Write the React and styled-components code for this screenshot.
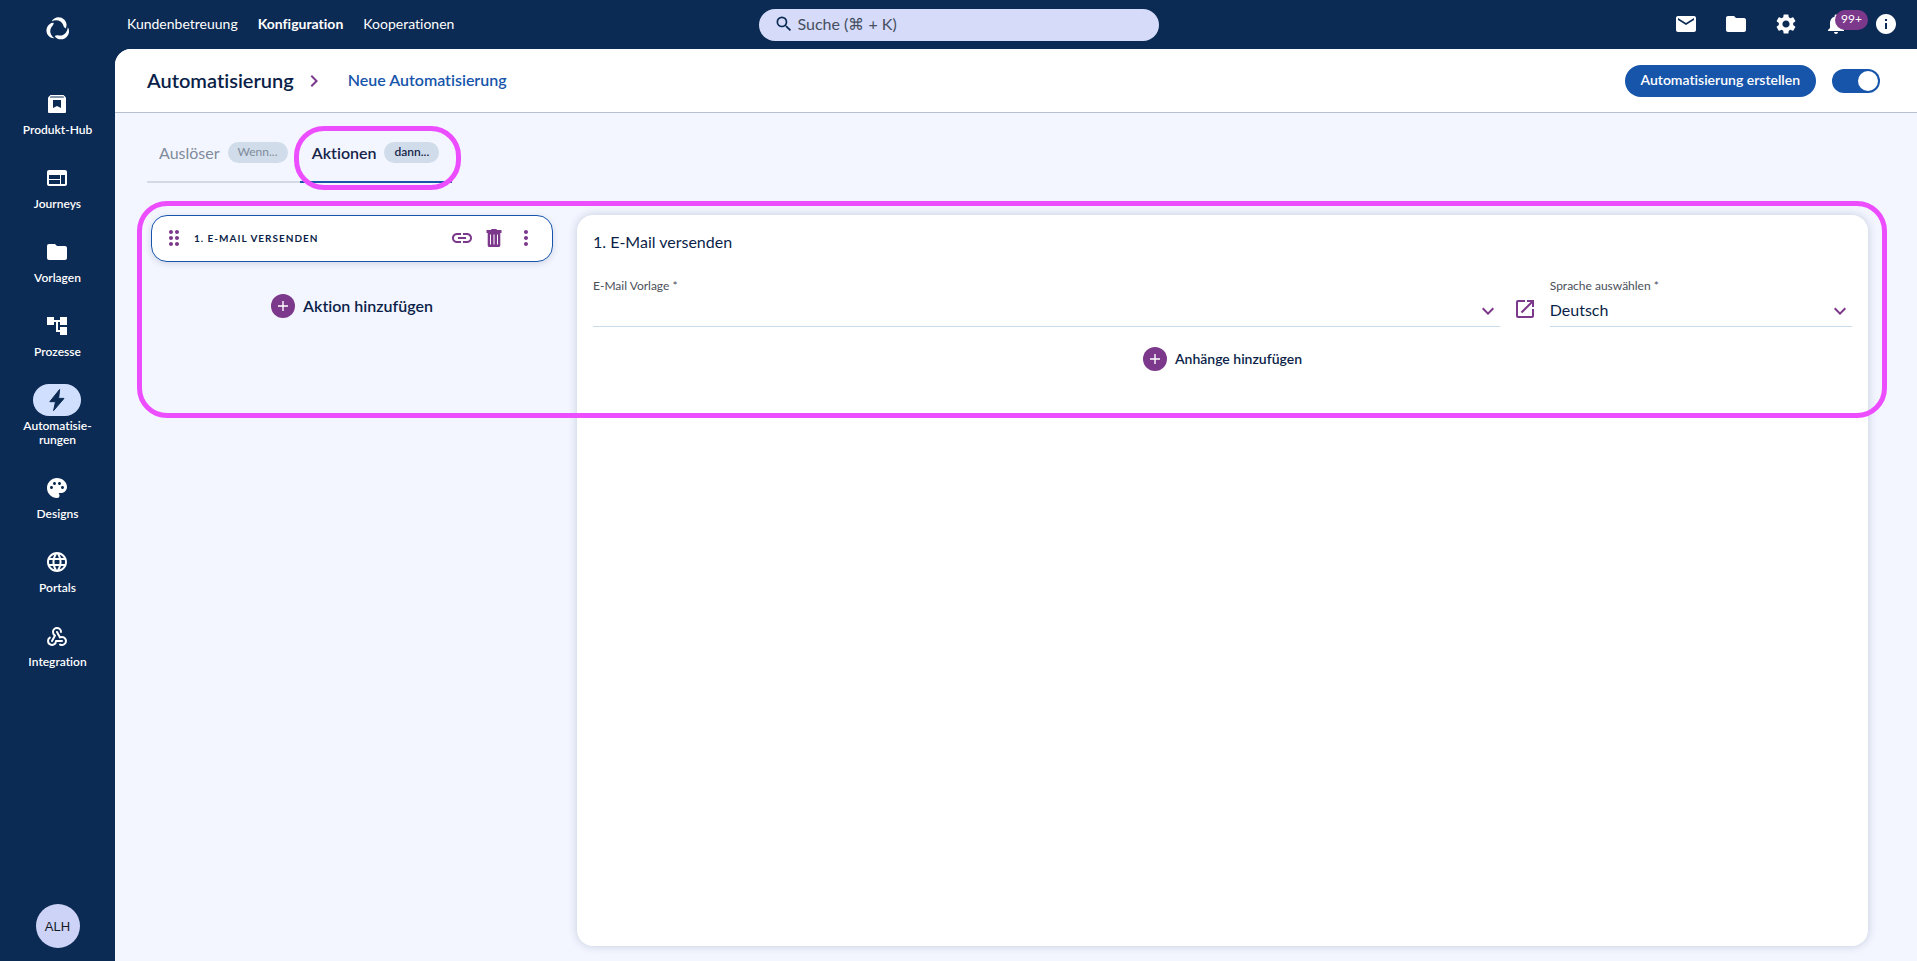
import React, { useState } from 'react';
import styled, { createGlobalStyle } from 'styled-components';
import {
    MdAccountTree,
    MdChevronRight,
    MdDragIndicator,
    MdExpandMore,
    MdFolder,
    MdInfo,
    MdLanguage,
    MdLink,
    MdMail,
    MdMoreVert,
    MdNotifications,
    MdOpenInNew,
    MdPalette,
    MdSearch,
    MdSettings,
    MdWeb,
} from 'react-icons/md';
import { TbWebhook } from 'react-icons/tb';

const colors = {
    navy: '#0b2a54',
    text: '#0b1f49',
    blue: '#1755ab',
    purple: '#7c388b',
    page: '#f3f6ff',
    chip: '#d0dce9',
    marker: '#ec4dff',
};

const GlobalStyle = createGlobalStyle`
  * {
    box-sizing: border-box;
  }
  body {
    margin: 0;
    background: ${colors.navy};
    color: ${colors.text};
    font-family: Lato, "Liberation Sans", sans-serif;
    font-size: 16px;
    font-variant-ligatures: none;
  }
  button, input, select {
    font-family: inherit;
    font-variant-ligatures: none;
  }
`;

const LogoIcon = () => (
    <svg width="26" height="26" viewBox="-13 -13 26 26" fill="currentColor" aria-hidden="true">
        {[0, 120, 240].map(angle => (
            <path
                key={angle}
                transform={`rotate(${angle})`}
                d="M-6.400 -7.600C-4.400 -12 2.400 -13.600 6.400 -9.200C8.800 -6.400 9.200 -3.200 7.600 -0.600C6.600 -1.200 5.600 -2.200 5.200 -4C3.600 -8.400 -1.600 -10 -6.400 -7.600Z"
            />
        ))}
    </svg>
);

const ProductIcon = () => (
    <svg width="24" height="24" viewBox="0 0 24 24" aria-hidden="true">
        <path fill="currentColor" d="M5.500 3h13L21 5.500V20a1 1 0 0 1-1 1H4a1 1 0 0 1-1-1V5.500z" />
        <path fill={colors.navy} d="M5.500 4.600h13l.7 1H4.800zM8 8h8v8l-4-2-4 2z" />
    </svg>
);

const BoltIcon = () => (
    <svg width="24" height="24" viewBox="0 0 24 24" aria-hidden="true">
        <path
            fill="currentColor"
            stroke="currentColor"
            strokeWidth="1"
            strokeLinejoin="round"
            d="M14.600 1.500L4.800 13.700h5.700L8.600 22.600L19 10.400h-5.400z"
        />
    </svg>
);

const TrashIcon = () => (
    <svg width="24" height="24" viewBox="0 0 24 24" aria-hidden="true">
        <path
            fill="currentColor"
            d="M9 4c.2-.8.600-1 1.200-1h3.600c.6 0 1 .2 1.200 1h4.500v3h-1.200v12.200c0 1-.8 1.800-1.800 1.800h-9c-1 0-1.800-.8-1.800-1.800V7H4.500V4z"
        />
        <path stroke="#fff" strokeWidth="1" d="M8.500 8.500v10M12 8.500v10M15.500 8.500v10" />
    </svg>
);

const navItems = [
    { name: 'Produkt-Hub', icon: <ProductIcon /> },
    { name: 'Journeys', icon: <MdWeb /> },
    { name: 'Vorlagen', icon: <MdFolder /> },
    { name: 'Prozesse', icon: <MdAccountTree /> },
    { name: <>Automatisie-<br />rungen</>, icon: <BoltIcon />, active: true },
    { name: 'Designs', icon: <MdPalette /> },
    { name: 'Portals', icon: <MdLanguage /> },
    { name: 'Integration', icon: <TbWebhook /> },
];

const tools = [
    { name: 'Nachrichten', icon: <MdMail /> },
    { name: 'Dateien', icon: <MdFolder /> },
    { name: 'Einstellungen', icon: <MdSettings /> },
    { name: 'Benachrichtigungen', icon: <MdNotifications />, badge: '99+' },
    { name: 'Info', icon: <MdInfo /> },
];

const AddAction = ({ small, children }) => (
    <AddButton type="button" $small={small}>
        <AddCircle>
            <svg width="12" height="12" viewBox="0 0 12 12" aria-hidden="true">
                <path d="M6 1v10M1 6h10" stroke="#fff" strokeWidth="1.400" />
            </svg>
        </AddCircle>
        {children}
    </AddButton>
);

const SelectField = ({ id, label, options }) => (
    <Field>
        <FieldLabel htmlFor={id}>{label} *</FieldLabel>
        <SelectWrap>
            <Select id={id}>
                {options.map(option => <option key={option}>{option}</option>)}
            </Select>
            <MdExpandMore />
        </SelectWrap>
    </Field>
);

const App = () => {
    const [enabled, setEnabled] = useState(true);

    return (
        <Page>
            <GlobalStyle />
            <TopBar>
                <TopLeft>
                    <Logo href="#" aria-label="Start"><LogoIcon /></Logo>
                    <TopNav>
                        <TopLink href="#">Kundenbetreuung</TopLink>
                        <TopLink href="#" $active>Konfiguration</TopLink>
                        <TopLink href="#">Kooperationen</TopLink>
                    </TopNav>
                </TopLeft>
                <Search>
                    <MdSearch />
                    <SearchInput type="search" aria-label="Suche" placeholder="Suche (⌘ + K)" />
                </Search>
                <Tools>
                    {tools.map(({ name, icon, badge }) => (
                        <ToolButton type="button" aria-label={name} key={name}>
                            {icon}
                            {badge && <Badge>{badge}</Badge>}
                        </ToolButton>
                    ))}
                </Tools>
            </TopBar>

            <Body>
                <Sidebar>
                    <SideNav>
                        {navItems.map(({ name, icon, active }, index) => (
                            <SideLink href="#" key={`nav_${index}`}>
                                <SideIcon $active={active}>{icon}</SideIcon>
                                <span>{name}</span>
                            </SideLink>
                        ))}
                    </SideNav>
                    <Avatar type="button">ALH</Avatar>
                </Sidebar>

                <Main>
                    <Header>
                        <Title>Automatisierung</Title>
                        <MdChevronRight />
                        <Crumb href="#">Neue Automatisierung</Crumb>
                        <HeaderActions>
                            <CreateButton type="button">Automatisierung erstellen</CreateButton>
                            <Switch
                                type="checkbox"
                                role="switch"
                                aria-label="Aktiv"
                                checked={enabled}
                                onChange={() => setEnabled(!enabled)}
                            />
                        </HeaderActions>
                    </Header>

                    <Content>
                        <Tabs role="tablist">
                            <Tab type="button" role="tab" aria-selected="false">
                                Auslöser <Chip>Wenn...</Chip>
                            </Tab>
                            <Tab type="button" role="tab" aria-selected="true" $active>
                                Aktionen <Chip>dann...</Chip>
                                <TabMarker />
                            </Tab>
                        </Tabs>

                        <Columns>
                            <Steps>
                                <StepCard>
                                    <IconButton type="button" aria-label="Verschieben"><MdDragIndicator /></IconButton>
                                    <StepName>1. E-Mail versenden</StepName>
                                    <IconButton type="button" aria-label="Verknüpfen"><MdLink /></IconButton>
                                    <IconButton type="button" aria-label="Löschen"><TrashIcon /></IconButton>
                                    <IconButton type="button" aria-label="Mehr"><MdMoreVert /></IconButton>
                                </StepCard>
                                <AddAction>Aktion hinzufügen</AddAction>
                            </Steps>

                            <Panel>
                                <PanelTitle>1. E-Mail versenden</PanelTitle>
                                <Fields>
                                    <SelectField id="template" label="E-Mail Vorlage" options={['']} />
                                    <IconButton type="button" aria-label="Vorlage öffnen"><MdOpenInNew /></IconButton>
                                    <SelectField id="language" label="Sprache auswählen" options={['Deutsch']} />
                                </Fields>
                                <AddAction small>Anhänge hinzufügen</AddAction>
                            </Panel>
                            <ColumnsMarker />
                        </Columns>
                    </Content>
                </Main>
            </Body>
        </Page>
    );
};

const Page = styled.div`
  min-height: 100vh;
  display: flex;
  flex-direction: column;
`;

const TopBar = styled.header`
  display: grid;
  grid-template-columns: 1fr 400px 1fr;
  align-items: center;
  height: 49px;
  color: #ffffff;
`;

const TopLeft = styled.div`
  display: flex;
  align-items: center;
`;

const Logo = styled.a`
  width: 116px;
  padding-top: 8px;
  color: inherit;
  display: flex;
  justify-content: center;
`;

const TopNav = styled.nav`
  display: flex;
  gap: 20px;
  padding: 0 0 2px 11px;
`;

const TopLink = styled.a`
  color: #ffffff;
  font-size: 14px;
  font-weight: ${props => props.$active ? 700 : 400};
  text-decoration: none;
`;

const Search = styled.label`
  display: flex;
  align-items: center;
  gap: 4px;
  height: 32px;
  padding: 0 15px 2px;
  border-radius: 16px;
  background: #d5dbf9;
  color: ${colors.navy};

  svg {
    width: 20px;
    height: 20px;
  }
`;

const SearchInput = styled.input`
  flex: 1;
  border: 0;
  padding: 0;
  outline: none;
  background: transparent;
  color: #454f60;
  font-size: 16px;

  &::placeholder {
    color: #454f60;
    opacity: 1;
  }
`;

const Tools = styled.div`
  display: flex;
  justify-content: flex-end;
  gap: 26px;
  padding: 0 19px 1px 0;
`;

const ToolButton = styled.button`
  position: relative;
  display: flex;
  border: 0;
  padding: 0;
  background: none;
  color: #ffffff;

  svg {
    width: 24px;
    height: 24px;
  }
`;

const Badge = styled.span`
  position: absolute;
  left: 11px;
  top: -2px;
  padding: 0 6px 2px;
  border-radius: 10px;
  background: ${colors.purple};
  font-size: 12px;
  line-height: 18px;
`;

const Body = styled.div`
  flex: 1;
  display: flex;
`;

const Sidebar = styled.aside`
  width: 115px;
  flex-shrink: 0;
  display: flex;
  flex-direction: column;
  justify-content: space-between;
  align-items: center;
  padding: 39px 0 13px;
`;

const SideNav = styled.nav`
  display: flex;
  flex-direction: column;
  gap: 25px;
`;

const SideLink = styled.a`
  display: flex;
  flex-direction: column;
  align-items: center;
  gap: 3px;
  color: #ffffff;
  font-size: 12px;
  font-weight: 600;
  line-height: 14px;
  text-align: center;
  text-decoration: none;
`;

const SideIcon = styled.span`
  display: flex;
  align-items: center;
  justify-content: center;
  width: 48px;
  height: 32px;
  border-radius: 16px;
  background: ${props => props.$active ? '#d1dfff' : 'transparent'};
  color: ${props => props.$active ? colors.navy : '#ffffff'};

  svg {
    width: 24px;
    height: 24px;
  }
`;

const Avatar = styled.button`
  width: 44px;
  height: 44px;
  border: 0;
  border-radius: 50%;
  padding: 0;
  background: #cdd3f7;
  color: #14181f;
  font-family: "Liberation Sans", sans-serif;
  font-size: 13px;
`;

const Main = styled.main`
  flex: 1;
  min-width: 0;
  display: flex;
  flex-direction: column;
  overflow: hidden;
  border-top-left-radius: 16px;
  background: ${colors.page};
`;

const Header = styled.div`
  display: flex;
  align-items: center;
  height: 64px;
  padding: 0 37px 0 32px;
  border-bottom: 1px solid #b5bfce;
  background: #ffffff;

  > svg {
    width: 24px;
    height: 24px;
    margin: 0 22px 0 8px;
    color: ${colors.purple};
  }
`;

const Title = styled.h1`
  margin: 0;
  padding-bottom: 2px;
  font-size: 20px;
  font-weight: 600;
`;

const Crumb = styled.a`
  padding-bottom: 2px;
  color: ${colors.blue};
  font-size: 16px;
  font-weight: 600;
  text-decoration: none;
`;

const HeaderActions = styled.div`
  display: flex;
  align-items: center;
  gap: 16px;
  margin-left: auto;
`;

const CreateButton = styled.button`
  height: 32px;
  border: 0;
  border-radius: 16px;
  padding: 0 16px 2px;
  background: ${colors.blue};
  color: #ffffff;
  font-size: 14px;
  font-weight: 600;
`;

const Switch = styled.input`
  appearance: none;
  display: flex;
  width: 48px;
  height: 24px;
  margin: 0;
  padding: 2px;
  border-radius: 12px;
  background: ${props => props.checked ? colors.blue : '#9aa5b5'};
  justify-content: ${props => props.checked ? 'flex-end' : 'flex-start'};

  &::before {
    content: '';
    width: 20px;
    height: 20px;
    border-radius: 50%;
    background: #ffffff;
  }
`;

const Content = styled.div`
  flex: 1;
  display: flex;
  flex-direction: column;
  padding: 12px 49px 15px 32px;
`;

const Tabs = styled.div`
  display: flex;
`;

const Tab = styled.button`
  position: relative;
  display: flex;
  align-items: center;
  justify-content: center;
  gap: 8px;
  min-width: 152px;
  height: 58px;
  border: 0;
  border-bottom: 2px solid ${props => props.$active ? colors.blue : '#d4d9e6'};
  padding: 0 12px 2px;
  background: none;
  color: ${props => props.$active ? '#16244a' : '#7f8b9b'};
  font-size: 16px;
  font-weight: ${props => props.$active ? 600 : 400};
`;

const Chip = styled.span`
  padding: 0 10px 2px;
  border-radius: 11px;
  background: ${colors.chip};
  font-size: 12px;
  line-height: 19px;
`;

/* highlight frames drawn over the interface */
const Marker = styled.span`
  position: absolute;
  border: 5px solid ${colors.marker};
  border-radius: 30px;
  pointer-events: none;
`;

const TabMarker = styled(Marker)`
  inset: 1px -9px -9px -6px;
`;

const ColumnsMarker = styled(Marker)`
  top: -14px;
  left: -10px;
  right: -19px;
  height: 217px;
`;

const Columns = styled.div`
  position: relative;
  flex: 1;
  display: flex;
  gap: 24px;
  margin-top: 32px;
`;

const Steps = styled.div`
  width: 406px;
  flex-shrink: 0;
  display: flex;
  flex-direction: column;
  align-items: center;
  gap: 32px;
  padding-left: 4px;
`;

const StepCard = styled.div`
  display: flex;
  align-items: center;
  gap: 8px;
  width: 100%;
  height: 47px;
  padding: 0 14px 2px 10px;
  border: 1px solid ${colors.blue};
  border-radius: 16px;
  background: #ffffff;
  box-shadow: 0 2px 6px rgba(11, 42, 84, 0.15);
`;

const StepName = styled.span`
  flex: 1;
  font-size: 10px;
  font-weight: 700;
  letter-spacing: 1px;
  text-transform: uppercase;
`;

const IconButton = styled.button`
  display: flex;
  border: 0;
  padding: 0;
  background: none;
  color: ${colors.purple};

  svg {
    width: 24px;
    height: 24px;
  }
`;

const AddButton = styled.button`
  display: flex;
  align-items: center;
  gap: 8px;
  border: 0;
  padding: 0;
  background: none;
  color: ${colors.text};
  font-size: ${props => props.$small ? 14 : 16}px;
  font-weight: 600;
  line-height: 22px;
`;

const AddCircle = styled.span`
  display: flex;
  align-items: center;
  justify-content: center;
  width: 24px;
  height: 24px;
  border-radius: 50%;
  background: ${colors.purple};
`;

const Panel = styled.section`
  flex: 1;
  min-width: 0;
  display: flex;
  flex-direction: column;
  align-items: center;
  padding: 16px;
  border-radius: 16px;
  background: #ffffff;
  box-shadow: 0 0 10px rgba(11, 42, 84, 0.2);
`;

const PanelTitle = styled.h2`
  align-self: stretch;
  margin: 0;
  font-size: 16px;
  font-weight: 400;
  line-height: 22px;
`;

const Fields = styled.div`
  display: grid;
  grid-template-columns: 3fr 24px 1fr;
  align-items: end;
  gap: 13px;
  width: 100%;
  margin: 25px 0 20px;

  > button {
    margin-bottom: 6px;
  }
`;

const Field = styled.div`
  display: flex;
  flex-direction: column;
`;

const FieldLabel = styled.label`
  color: #4a4f5a;
  font-size: 12px;
  line-height: 16px;
`;

const SelectWrap = styled.div`
  position: relative;
  display: flex;
  border-bottom: 1px solid #c9dcec;

  svg {
    position: absolute;
    right: 0;
    top: 5px;
    width: 24px;
    height: 24px;
    color: ${colors.purple};
    pointer-events: none;
  }
`;

const Select = styled.select`
  appearance: none;
  width: 100%;
  height: 32px;
  border: 0;
  padding: 0 0 2px;
  background: transparent;
  color: ${colors.text};
  font-size: 16px;
`;

export default App;
